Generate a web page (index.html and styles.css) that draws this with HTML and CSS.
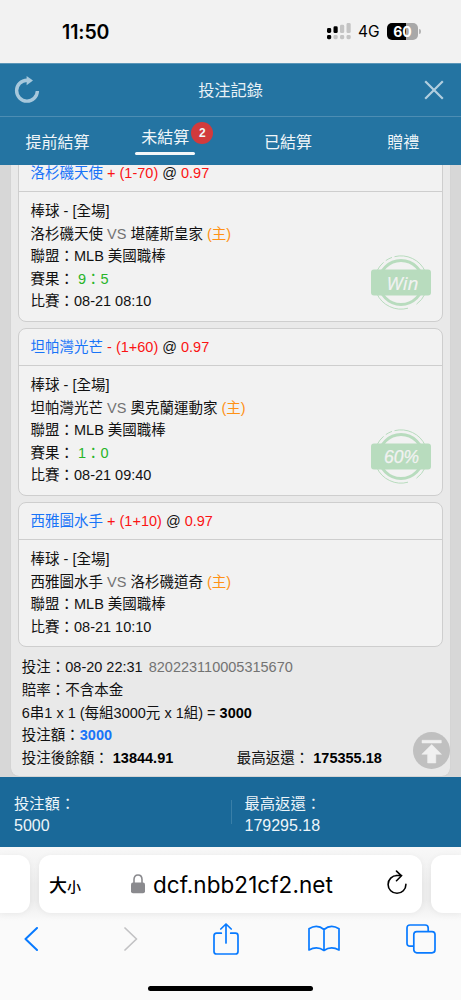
FILE: index.html
```html
<!DOCTYPE html>
<html lang="zh-Hant">
<head>
<meta charset="utf-8">
<title>投注記錄</title>
<link rel="stylesheet" href="styles.css">
</head>
<body>
<div class="phone">
  <div class="status">
    <span class="time">11:50</span>
    <svg class="signal" width="24" height="17" viewBox="0 0 24 17">
      <g fill="#000"><rect x="0" y="5" width="4.2" height="5" rx="1.4"/><rect x="0" y="12" width="4.2" height="4.2" rx="1.4"/><rect x="6.5" y="3.3" width="4.2" height="6.8" rx="1.4"/></g>
      <g fill="#c4c4c4"><rect x="6.5" y="12" width="4.2" height="4.2" rx="1.4"/><rect x="13" y="1.8" width="4.2" height="8.3" rx="1.4"/><rect x="13" y="12" width="4.2" height="4.2" rx="1.4"/><rect x="19.5" y="0" width="4.2" height="10.1" rx="1.4"/><rect x="19.5" y="12" width="4.2" height="4.2" rx="1.4"/></g>
    </svg>
    <span class="network">4G</span>
    <span class="battery">60</span>
    <span class="battery-tip"></span>
  </div>

  <header class="titlebar">
    <svg width="28" height="28" viewBox="0 0 28 28">
      <path d="M15 4.3H14A10.4 10.4 0 1 0 24.4 15" fill="none" stroke="#a7c8dc" stroke-width="3.4"/>
      <path d="M13.6 0L20 4.6L13.6 9.2Z" fill="#a7c8dc"/>
    </svg>
    <h1>投注記錄</h1>
    <svg width="20" height="20" viewBox="0 0 20 20"><path d="M1.2 1.2L18.8 18.8M18.8 1.2L1.2 18.8" stroke="#b1cedf" stroke-width="2.2" fill="none"/></svg>
  </header>

  <nav class="tabs">
    <a class="tab">提前結算</a>
    <a class="tab active"><span class="label">未結算<span class="badge">2</span></span></a>
    <a class="tab">已結算</a>
    <a class="tab">贈禮</a>
  </nav>

  <main class="content">
    <section class="slip">
      <article class="card">
        <div class="pick"><span class="blue">洛杉磯天使</span> <span class="red">+ (1-70)</span> @ <span class="red">0.97</span></div>
        <div class="detail">
          <div>棒球 - [全場]</div>
          <div>洛杉磯天使 <span class="gray">VS</span> 堪薩斯皇家 <span class="orange">(主)</span></div>
          <div>聯盟：MLB 美國職棒</div>
          <div>賽果： <span class="green">9：5</span></div>
          <div>比賽：08-21 08:10</div>
          <svg class="stamp" width="60" height="55" viewBox="0 0 60 55">
            <g fill="none" stroke="#b8dcbe"><circle cx="30" cy="27.5" r="22" stroke-width="3"/><path d="M6.2 15.5A26.6 26.6 0 0 1 12.6 7.3M14.8 5.6A26.6 26.6 0 0 1 21 2.4M23.5 1.7A26.6 26.6 0 0 1 54.2 16.5M54.2 38.5A26.6 26.6 0 0 1 45.5 49.2M37 53.2A26.6 26.6 0 0 1 5.8 38.5"/></g>
            <rect y="14.5" width="60" height="26" rx="3" fill="#b8dcbe"/>
            <text class="stamp-text win" x="31.5" y="34.5">Win</text>
          </svg>
        </div>
      </article>

      <article class="card">
        <div class="pick"><span class="blue">坦帕灣光芒</span> <span class="red">- (1+60)</span> @ <span class="red">0.97</span></div>
        <div class="detail">
          <div>棒球 - [全場]</div>
          <div>坦帕灣光芒 <span class="gray">VS</span> 奧克蘭運動家 <span class="orange">(主)</span></div>
          <div>聯盟：MLB 美國職棒</div>
          <div>賽果： <span class="green">1：0</span></div>
          <div>比賽：08-21 09:40</div>
          <svg class="stamp" width="60" height="55" viewBox="0 0 60 55">
            <g fill="none" stroke="#b8dcbe"><circle cx="30" cy="27.5" r="22" stroke-width="3"/><path d="M6.2 15.5A26.6 26.6 0 0 1 12.6 7.3M14.8 5.6A26.6 26.6 0 0 1 21 2.4M23.5 1.7A26.6 26.6 0 0 1 54.2 16.5M54.2 38.5A26.6 26.6 0 0 1 45.5 49.2M37 53.2A26.6 26.6 0 0 1 5.8 38.5"/></g>
            <rect y="14.5" width="60" height="26" rx="3" fill="#b8dcbe"/>
            <text class="stamp-text" x="30.5" y="33.5">60%</text>
          </svg>
        </div>
      </article>

      <article class="card">
        <div class="pick"><span class="blue">西雅圖水手</span> <span class="red">+ (1+10)</span> @ <span class="red">0.97</span></div>
        <div class="detail">
          <div>棒球 - [全場]</div>
          <div>西雅圖水手 <span class="gray">VS</span> 洛杉磯道奇 <span class="orange">(主)</span></div>
          <div>聯盟：MLB 美國職棒</div>
          <div>比賽：08-21 10:10</div>
        </div>
      </article>

      <div class="summary">
        <div>投注：08-20 22:31 <span class="gray serial">820223110005315670</span></div>
        <div>賠率：不含本金</div>
        <div>6串1 x 1 (每組3000元 x 1組) = <b>3000</b></div>
        <div>投注額：<b class="blue">3000</b></div>
        <div class="split"><span>投注後餘額： <b>13844.91</b></span><span>最高返還： <b>175355.18</b></span></div>
      </div>
    </section>
    <svg class="to-top" width="37" height="37" viewBox="0 0 37 37">
      <circle cx="18.5" cy="18.5" r="18.5" fill="#c0c0c0"/>
      <path d="M9 8.3H28.3V11H9ZM18.7 12.5L28.5 22.3H22.8V31H14.6V22.3H8.8Z" fill="#f0f0f0" stroke="#f0f0f0" stroke-width=".5" stroke-linejoin="round"/>
    </svg>
  </main>

  <footer class="totals">
    <div>投注額：<br><span class="amount">5000</span></div>
    <div>最高返還：<br><span class="amount">179295.18</span></div>
  </footer>

  <div class="browser">
    <div class="address-row">
      <span class="side-tab left"></span>
      <div class="address">
        <span class="text-size">大<small>小</small></span>
        <span class="url">
          <svg width="14" height="20" viewBox="0 0 14 20"><path d="M3 9V5.6Q3 1 7 1T11 5.6V9" fill="none" stroke="#8a8a8e" stroke-width="1.6"/><rect x="0" y="8.5" width="14" height="10.7" rx="2" fill="#8a8a8e"/></svg>
          <span class="host">dcf.nbb21cf2.net</span>
        </span>
        <svg class="reload" width="22" height="26" viewBox="0 0 22 26"><path d="M11 5.5A8.9 8.9 0 1 0 19.9 14.4M10 5.5H15.7M10.5 1.1L15.5 5.8L10.5 10.7" fill="none" stroke="#000" stroke-width="1.6" stroke-linecap="round" stroke-linejoin="round"/></svg>
      </div>
      <span class="side-tab right"></span>
    </div>
    <div class="toolbar">
      <svg width="14" height="24" viewBox="0 0 14 24"><path d="M13 1L1.5 12L13 23" fill="none" stroke="#087aff" stroke-width="2" stroke-linecap="round" stroke-linejoin="round"/></svg>
      <svg class="forward" width="14" height="24" viewBox="0 0 14 24"><path d="M1 1L12.5 12L1 23" fill="none" stroke="#c2c2c4" stroke-width="1.7" stroke-linecap="round" stroke-linejoin="round"/></svg>
      <svg width="26" height="32" viewBox="0 0 26 32"><path d="M8.3 10.2H3.5Q1 10.2 1 12.7V28.5Q1 31 3.5 31H22.5Q25 31 25 28.5V12.7Q25 10.2 22.5 10.2H17.7M13 20V1.2M7.8 6L13 1L18.2 6" fill="none" stroke="#087aff" stroke-width="1.7" stroke-linecap="round" stroke-linejoin="round"/></svg>
      <svg width="32" height="27" viewBox="0 0 32 27"><path d="M16 4.5V25.5M16 4.5Q9-1.5 1 3.8V25Q9 20.5 16 25.5Q23 20.5 31 25V3.8Q23-1.5 16 4.5Z" fill="none" stroke="#087aff" stroke-width="1.7" stroke-linejoin="round"/></svg>
      <svg width="30" height="30" viewBox="0 0 30 30"><g fill="none" stroke="#087aff" stroke-width="1.7"><path d="M7.5 22.2H4Q1 22.2 1 19.2V4Q1 1 4 1H19.2Q22.2 1 22.2 4V7.3"/><rect x="7.8" y="7.6" width="21.2" height="21.2" rx="3"/></g></svg>
    </div>
    <div class="home-indicator"></div>
  </div>
</div>
</body>
</html>
```
FILE: styles.css
```css
* { box-sizing: border-box; }
body { margin: 0; font-family: "Liberation Sans", "Noto Sans CJK TC", sans-serif; color: #111; }
svg { display: block; flex: none; }
.phone { width: 461px; height: 1000px; overflow: hidden; display: flex; flex-direction: column; background: #f2f2f2; }

.status { height: 63px; flex: none; display: flex; align-items: center; padding: 0 40px 0 62px; font-family: Inter, sans-serif; color: #000; }
.time { font-size: 19.5px; font-weight: 600; letter-spacing: -.1px; width: 265px; }
.signal { margin-top: -1px; }
.network { font-size: 15.5px; margin-left: 7px; width: 29px; font-weight: 400; letter-spacing: -.1px; }
.battery { width: 31px; height: 17px; border-radius: 5px; background: linear-gradient(90deg, #000 61%, #a8a8a8 61%); color: #fff; font-size: 14px; font-weight: 700; line-height: 17px; text-align: center; margin-top: -1px; }
.battery-tip { width: 2px; height: 5px; margin-left: 1px; border-radius: 0 2px 2px 0; background: #b4b4b4; }

.titlebar { height: 53px; flex: none; display: grid; grid-template-columns: 60px 1fr 60px; align-items: center; padding: 0 17px 0 13px; background: #2474a2; border-top: 1px solid #5b96b8; color: #e8f1f6; }
.titlebar h1 { margin: 0; font-size: 16.2px; font-weight: 400; line-height: 24px; text-align: center; padding-left: 4px; }
.titlebar svg:last-child { justify-self: end; }

.tabs { height: 49px; flex: none; display: grid; grid-template-columns: repeat(4, 1fr); background: #2474a2; border-top: 1px solid #4d8db3; color: #f0f6f9; font-size: 16px; }
.tab { display: flex; align-items: center; justify-content: center; padding-bottom: 1px; }
.tab.active { align-items: flex-start; justify-content: flex-start; padding: 5px 0 0 20px; }
.label { position: relative; width: 60px; height: 33px; line-height: 31px; text-align: center; }
.label::after { content: ""; display: block; height: 3px; margin-top: -1px; border-radius: 2px; background: #f4f7f9; }
.badge { position: absolute; left: 56px; top: 0; width: 22px; height: 22px; border-radius: 50%; background: #d23a3c; font-size: 12px; font-weight: 700; line-height: 22px; }

.content { position: relative; height: 612px; flex: none; overflow: hidden; background: #d7d7d7; padding: 0 11px 0 10.5px; }
.slip { margin-top: -19px; height: 630px; background: #e9e9e9; border-radius: 8px; padding: 8px 7.5px 0 7.5px; font-size: 14.5px; line-height: 22.6px; box-shadow: 0 0 1px #bbb; white-space: nowrap; }
.card { border: 1px solid #cecece; border-radius: 8px; background: #f2f2f2; margin-bottom: 6px; }
.pick { height: 37px; line-height: 37px; border-bottom: 1px solid #cecece; padding-left: 11.5px; }
.detail { position: relative; padding: 8px 11.5px; }
.blue { color: #1874f8; }
.red { color: #fb1414; }
.orange { color: #ff9114; }
.green { color: #28b428; }
.gray { color: #737373; }
.stamp { position: absolute; right: 11px; bottom: 11px; }
.stamp-text { font: italic 400 17.5px "Liberation Sans", sans-serif; fill: #f2f2f2; stroke: #f2f2f2; stroke-width: .25px; text-anchor: middle; }
.stamp-text.win { font: italic 400 19px "Open Sans", "Noto Sans", sans-serif; stroke-width: .15px; }
.summary { padding: 3px 3px 0 3.75px; }
.serial { margin-left: 2px; }
.summary b { color: #000; }
.summary b.blue { color: #1874f8; }
.split { display: grid; grid-template-columns: 215px 1fr; }
.to-top { position: absolute; left: 413px; top: 567px; }

.totals { height: 70px; flex: none; display: grid; grid-template-columns: 1fr 1fr; background: #1a6999; color: #edf5f9; font-size: 15.3px; line-height: 22.5px; align-items: center; }
.totals div { padding: 6px 0 0 14px; }
.totals div + div { background: linear-gradient(#397fa8, #397fa8) 0 13px / 1px 24px no-repeat; }
.amount { font-size: 16px; }

.browser { flex: 1; background: #fafafa; }
.address-row { height: 83px; display: grid; grid-template-columns: 30px 383px 30px; column-gap: 9px; padding-top: 8px; background: linear-gradient(#f8f8f8, #ededed 45%, #ededed 65%, #fafafa 90%); }
.address, .side-tab { height: 58px; background: #fff; border-radius: 12px; box-shadow: 0 1px 6px rgba(0,0,0,.05); }
.side-tab.left { border-radius: 0 12px 12px 0; }
.side-tab.right { border-radius: 12px 0 0 12px; }
.address { display: flex; align-items: center; padding: 0 14px 0 10px; color: #000; }
.text-size { width: 82px; font: 500 18px "Noto Sans CJK TC", sans-serif; }
.text-size small { font-size: 14px; }
.url { display: flex; align-items: center; gap: 8px; flex: 1; }
.host { font: 400 22.5px Inter, sans-serif; letter-spacing: .05px; white-space: nowrap; }
.reload { margin-top: -2px; }
.toolbar { width: 488px; height: 33px; margin: -8px 0 0 -18px; display: grid; grid-template-columns: repeat(5, 1fr); align-items: center; justify-items: center; }
.forward { margin-left: 5px; }
.home-indicator { width: 165px; height: 5px; margin: 31px auto 0; border-radius: 3px; background: #000; }
```
